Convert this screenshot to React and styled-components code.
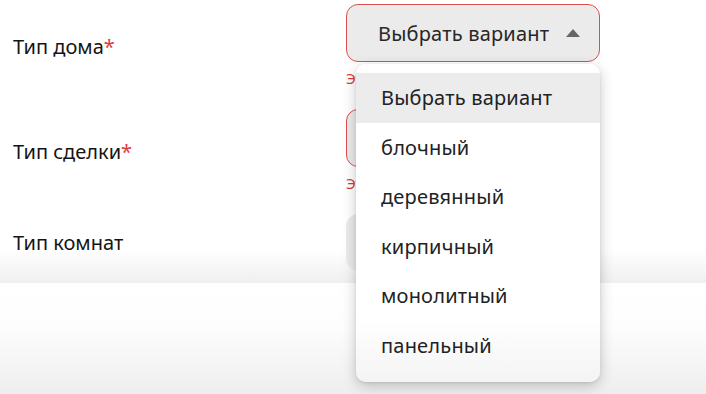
import React from "react";
import styled, { createGlobalStyle } from "styled-components";

const Global = createGlobalStyle`
  html, body { margin: 0; padding: 0; background: #fff; }
  body { font-family: "Noto Sans", "Open Sans", sans-serif; width: 706px; height: 394px; overflow: hidden; }
`;

const Page = styled.div`
  width: 706px;
  height: 394px;
  display: flex;
  flex-direction: column;
`;

const Content = styled.div`
  height: 283px;
  flex: none;
  box-sizing: border-box;
  padding: 4px 0 0 13px;
  display: flex;
  flex-direction: column;
  gap: 20px;
  background: linear-gradient(to bottom, #fff 0, #fff 250px, #efefef 283px);
`;

const Footer = styled.div`
  flex: 1;
  background: linear-gradient(to bottom, #ffffff 0%, #fdfdfd 40%, #eeeeee 100%);
`;

const Row = styled.div`
  display: grid;
  grid-template-columns: 333px 254px;
  align-items: center;
`;

const Label = styled.div`
  font-size: 20px;
  color: #141414;
  line-height: 26px;
`;

const Star = styled.span`
  color: #dc3b3b;
`;

const Field = styled.div`
  position: relative;
  display: flex;
  flex-direction: column;
`;

const Select = styled.div`
  box-sizing: border-box;
  height: ${p => p.$h || 58}px;
  border-radius: 12px;
  background: #ebebeb;
  border: 1px solid ${p => (p.$error ? "#de4e4e" : "#ebebeb")};
  display: flex;
  align-items: center;
  padding-left: 31px;
  gap: 17px;
  font-size: 20px;
  letter-spacing: 0.2px;
  color: #272727;
  white-space: nowrap;
`;

const Caret = styled.svg`
  width: 14px;
  height: 8px;
  flex: none;
`;

const Error = styled.div`
  margin-top: 5px;
  font-size: 15px;
  line-height: 22px;
  color: #d63c3c;
  white-space: nowrap;
`;

const Menu = styled.ul`
  position: absolute;
  z-index: 10;
  top: 60px;
  left: 10px;
  width: 244px;
  margin: 0;
  padding: 9px 0 12px;
  list-style: none;
  border-radius: 10px;
  background: linear-gradient(to bottom, #fff 0%, #fff 80%, #f4f4f4 100%);
  box-shadow: 0 4px 14px rgba(0, 0, 0, 0.22), 0 1px 3px rgba(0, 0, 0, 0.08);
`;

const Item = styled.li`
  height: 49.5px;
  display: flex;
  align-items: center;
  padding-left: 25px;
  font-size: 20px;
  letter-spacing: 0.2px;
  color: #222;
  background: ${p => (p.$active ? "#ececec" : "transparent")};
`;

const options = ["Выбрать вариант", "блочный", "деревянный", "кирпичный", "монолитный", "панельный"];

export default function App() {
  return (
    <Page>
      <Global />
      <Content>
        <Row>
          <Label>Тип дома<Star>*</Star></Label>
          <Field>
            <Select $error>
              Выбрать вариант
              <Caret viewBox="0 0 14 8"><path d="M7 0 L14 8 L0 8 Z" fill="#666" /></Caret>
            </Select>
            <Error>Это поле обязательно</Error>
            <Menu>
              {options.map((o, i) => (
                <Item key={o} $active={i === 0}>{o}</Item>
              ))}
            </Menu>
          </Field>
        </Row>
        <Row>
          <Label>Тип сделки<Star>*</Star></Label>
          <Field>
            <Select $error>
              Выбрать вариант
              <Caret viewBox="0 0 14 8"><path d="M0 0 L14 0 L7 8 Z" fill="#666" /></Caret>
            </Select>
            <Error>Это поле обязательно</Error>
          </Field>
        </Row>
        <Row>
          <Label>Тип комнат</Label>
          <Field>
            <Select $h={57}>
              Выбрать вариант
              <Caret viewBox="0 0 14 8"><path d="M0 0 L14 0 L7 8 Z" fill="#666" /></Caret>
            </Select>
          </Field>
        </Row>
      </Content>
      <Footer />
    </Page>
  );
}
